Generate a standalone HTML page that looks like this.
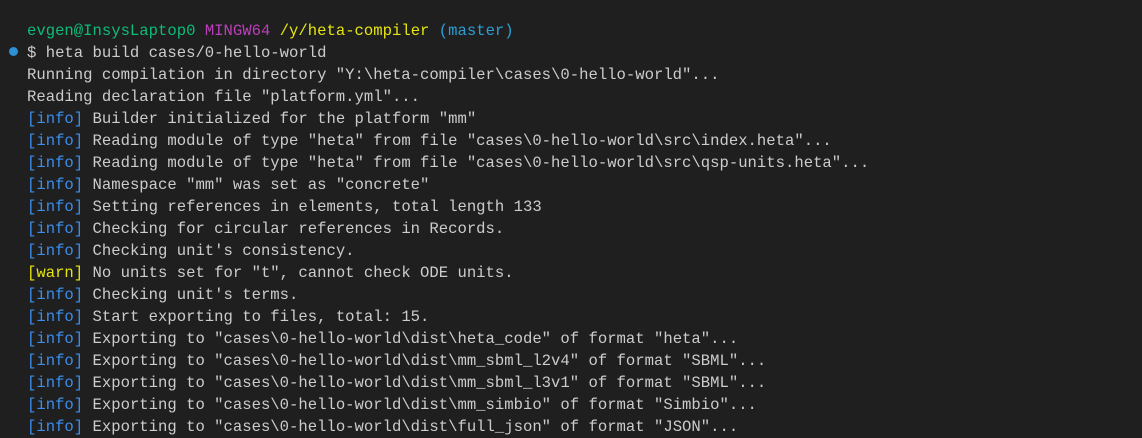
<html><head><style>
body{margin:0;background:#1f1f1f;width:1142px;height:421px;overflow:hidden;font-family:"Liberation Mono",monospace;font-size:15.6px;color:#cccccc}
.t{position:absolute;left:27px;top:20px;white-space:pre;line-height:22px}
.g{color:#0dbc79}.m{color:#bc3fbc}.y{color:#e5e510}.c{color:#2a9fd6}.b{color:#3b8eea}
.dot{position:absolute;left:9px;top:47px;width:9px;height:9px;border-radius:50%;background:#2d8fd5}
</style></head><body>
<div class="dot"></div>
<div class="t"><span class="g">evgen@InsysLaptop0</span> <span class="m">MINGW64</span> <span class="y">/y/heta-compiler</span> <span class="c">(master)</span>
$ heta build cases/0-hello-world
Running compilation in directory "Y:\heta-compiler\cases\0-hello-world"...
Reading declaration file "platform.yml"...
<span class="b">[info]</span> Builder initialized for the platform "mm"
<span class="b">[info]</span> Reading module of type "heta" from file "cases\0-hello-world\src\index.heta"...
<span class="b">[info]</span> Reading module of type "heta" from file "cases\0-hello-world\src\qsp-units.heta"...
<span class="b">[info]</span> Namespace "mm" was set as "concrete"
<span class="b">[info]</span> Setting references in elements, total length 133
<span class="b">[info]</span> Checking for circular references in Records.
<span class="b">[info]</span> Checking unit's consistency.
<span class="y">[warn]</span> No units set for "t", cannot check ODE units.
<span class="b">[info]</span> Checking unit's terms.
<span class="b">[info]</span> Start exporting to files, total: 15.
<span class="b">[info]</span> Exporting to "cases\0-hello-world\dist\heta_code" of format "heta"...
<span class="b">[info]</span> Exporting to "cases\0-hello-world\dist\mm_sbml_l2v4" of format "SBML"...
<span class="b">[info]</span> Exporting to "cases\0-hello-world\dist\mm_sbml_l3v1" of format "SBML"...
<span class="b">[info]</span> Exporting to "cases\0-hello-world\dist\mm_simbio" of format "Simbio"...
<span class="b">[info]</span> Exporting to "cases\0-hello-world\dist\full_json" of format "JSON"...</div>
</body></html>
